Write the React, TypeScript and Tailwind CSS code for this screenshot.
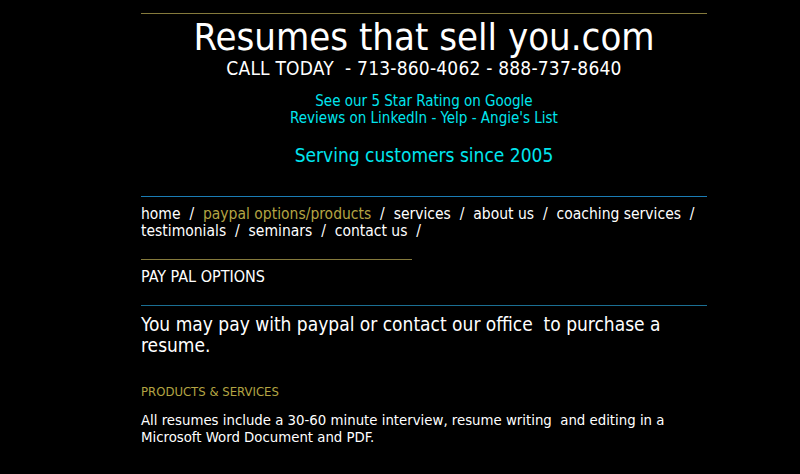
export default function App() {
  const nav = [
    { label: 'home' },
    { label: 'paypal options/products', active: true },
    { label: 'services' },
    { label: 'about us' },
    { label: 'coaching services' },
    { label: 'testimonials' },
    { label: 'seminars' },
    { label: 'contact us' },
  ]

  return (
    <div className="min-h-[474px] bg-black font-['DejaVu_Sans_Condensed','DejaVu_Sans',sans-serif] text-white">
      <div className="ml-[141px] w-[566px] pt-[13px] pb-10">
        <div className="h-px bg-[#857a3c]" />

        <header className="text-center">
          <h1 className="mt-[3px] text-[38px] leading-[40px] text-white">Resumes that sell you.com</h1>
          <p className="text-[19px] leading-[22px] tracking-[0.2px] whitespace-pre">CALL TODAY  - 713-860-4062 - 888-737-8640</p>

          <div className="mt-[14px] text-[15px] leading-[17px] text-[#00e5ee]">
            <p>See our 5 Star Rating on Google</p>
            <p>Reviews on LinkedIn - Yelp - Angie's List</p>
          </div>

          <p className="mt-[17px] text-[19px] leading-[22px] text-[#00e5ee]">Serving customers since 2005</p>
        </header>

        <div className="mt-[30px] h-px bg-[#1b7db5]" />

        <nav className="mt-[9px] text-[15.5px] leading-[17px]">
          {nav.map((n) => (
            <span key={n.label}>
              <span className="whitespace-nowrap">
                <a className={n.active ? 'text-[#b3a443]' : 'text-white'}>{n.label}</a>
                {'\u00a0\u00a0/\u00a0'}
              </span>{' '}
            </span>
          ))}
        </nav>

        <div className="mt-[19px] h-px w-[271px] bg-[#857a3c]" />
        <h2 className="mt-[8px] text-[16px] leading-[18px]">PAY PAL OPTIONS</h2>

        <div className="mt-[19px] h-px bg-[#1b6f93]" />
        <p className="mt-[8px] text-[19px] leading-[21px]">
          You may pay with paypal or contact our office&nbsp; to purchase a resume.
        </p>

        <h3 className="mt-[28px] text-[13px] leading-[15px] text-[#b3a443]">PRODUCTS &amp; SERVICES</h3>
        <p className="mt-[13px] text-[14.8px] leading-[16.5px]">
          All resumes include a 30-60 minute interview, resume writing&nbsp; and editing in a Microsoft Word Document and PDF.
        </p>
      </div>
    </div>
  )
}
